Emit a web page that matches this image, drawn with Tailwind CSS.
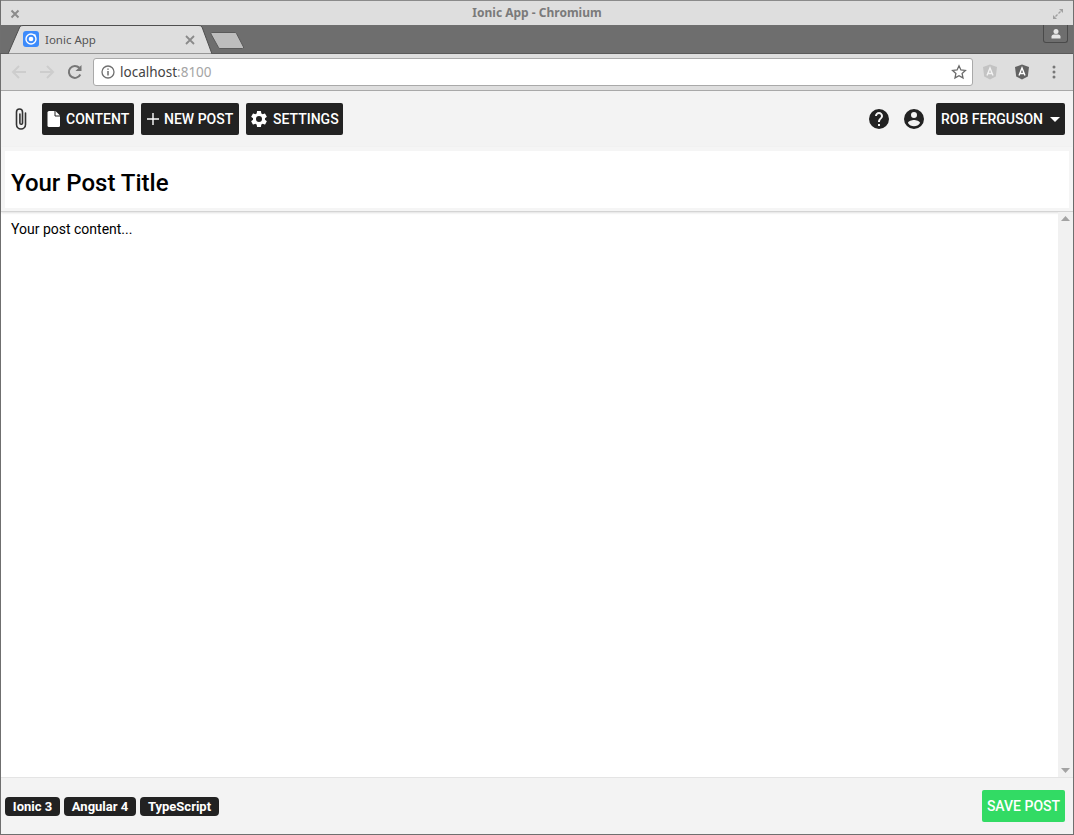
<!DOCTYPE html>
<html lang="en">
<head>
    <meta charset="UTF-8">
    <title>Ionic App - Chromium</title>
    <script src="https://cdn.jsdelivr.net/npm/@tailwindcss/browser@4"></script>
</head>
<body class="w-[1074px] h-[835px] overflow-hidden bg-white font-['Roboto',sans-serif]">
    <div class="flex flex-col h-[835px] border-x border-b border-[#6f6f6f]">

        <!-- window title -->
        <div class="relative h-[25px] shrink-0 bg-[#dedede] border-t border-[#8a8a8a] flex items-center justify-center font-['Noto_Sans',sans-serif] text-[12px] font-bold text-[#7a7a7a]">
            <svg class="absolute left-[9px] top-[8px]" width="10" height="10" viewBox="0 0 10 10"><path d="M1.5 1.5l7 7M8.5 1.5l-7 7" stroke="#8c8c8c" stroke-width="2"/></svg>
            <span>Ionic App - Chromium</span>
            <svg class="absolute left-[1051px] top-[7px]" width="12" height="12" viewBox="0 0 12 12"><path d="M11 1H7l4 4zM1 11h4l-4-4z" fill="#a0a0a0"/><path d="M8.500 3.500l-2 2M3.500 8.500l2-2" stroke="#a0a0a0" stroke-width="1.300"/></svg>
        </div>

        <!-- tab strip -->
        <div class="relative h-[29px] shrink-0 bg-[#6e6e6e] border-b border-[#5a5a5a]">
            <svg class="absolute left-[-1px] top-0" width="260" height="29" viewBox="0 0 260 29">
                <path d="M8 29 L20 1.500 Q21 0.500 23 0.500 H199 Q201 0.500 202 2 L212 29 Z" fill="#dedede" stroke="#4f4f4f" stroke-width="1"/>
                <path d="M0 28.500 H8 M212 28.500 H260" stroke="#5a5a5a" fill="none"/>
                <path d="M211.500 7.500 H235 Q236 7.500 236.500 8.500 L243.500 22 Q244 23.500 242.500 23.500 H220 Q219 23.500 218.500 22.500 L211 9 Q210.500 7.500 211.500 7.500 Z" fill="#bdbdbd" stroke="#5a5a5a"/>
            </svg>
            <div class="absolute left-[22px] top-[6px] w-4 h-4 rounded-[3px] bg-[#3d8bfb] flex items-center justify-center">
                <svg width="14" height="14" viewBox="0 0 14 14"><circle cx="7" cy="7" r="5" fill="none" stroke="#fff" stroke-width="1.400"/><circle cx="7" cy="7" r="2.300" fill="#fff"/><circle cx="10.700" cy="3.300" r="1" fill="#fff"/></svg>
            </div>
            <span class="absolute left-[44px] top-[7px] font-['Noto_Sans',sans-serif] text-[11.500px] leading-[16px] text-[#555]">Ionic App</span>
            <svg class="absolute left-[184px] top-[10px]" width="10" height="10" viewBox="0 0 10 10"><path d="M1 1l8 8M9 1l-8 8" stroke="#8a8a8a" stroke-width="1.800"/></svg>
            <div class="absolute left-[1042px] top-0 w-[25px] h-[18px] rounded-b-[3px] border border-t-0 border-[#4a4a4a] flex items-center justify-center">
                <svg width="12" height="12" viewBox="0 0 12 12"><circle cx="6" cy="3.500" r="2.500" fill="#e6e6e6"/><path d="M1.500 10.500v-2q0-1.500 2-2h5q2 .5 2 2v2z" fill="#e6e6e6"/></svg>
            </div>
        </div>

        <!-- browser toolbar -->
        <div class="h-[37px] shrink-0 bg-[#dedede] border-b border-[#a8a8a8] flex items-center">
            <svg class="ml-[9px]" width="18" height="18" viewBox="0 0 18 18"><path d="M16 9H3M9 3L3 9l6 6" fill="none" stroke="#cdcdcd" stroke-width="2"/></svg>
            <svg class="ml-[10px]" width="18" height="18" viewBox="0 0 18 18"><path d="M2 9h13M9 3l6 6-6 6" fill="none" stroke="#cdcdcd" stroke-width="2"/></svg>
            <svg class="ml-[10px]" width="18" height="18" viewBox="0 0 18 18"><path d="M14.300 11.500A6 6 0 1 1 13.300 4.800" fill="none" stroke="#777" stroke-width="2"/><path d="M15.500 2v6h-6z" fill="#777"/></svg>
            <div class="ml-[9px] w-[880px] h-[28px] bg-white border border-[#a9a9a9] rounded-[3px] flex items-center pl-[6px] pr-[5px] font-['Noto_Sans',sans-serif] text-[13.500px]">
                <svg width="16" height="16" viewBox="0 0 16 16"><circle cx="8" cy="8" r="6" fill="none" stroke="#6f6f6f" stroke-width="1.300"/><path d="M8 7v4.500M8 4.500v1.300" stroke="#6f6f6f" stroke-width="1.500"/></svg>
                <span class="ml-[4px] text-[#444]">localhost<span class="text-[#a5a5a5]">:8100</span></span>
                <svg class="ml-auto" width="16" height="16" viewBox="0 0 16 16"><path d="M8 1.800l1.900 4.100 4.500.5-3.300 3 .9 4.500L8 11.700l-4 2.200.9-4.500-3.300-3 4.500-.5z" fill="none" stroke="#6a6a6a" stroke-width="1.300"/></svg>
            </div>
            <svg class="ml-[8px]" width="18" height="18" viewBox="0 0 18 18"><path d="M9 1.500l7 2.500-1.200 9.500L9 16.500l-5.800-3L2 4z" fill="#c3c3c3"/><path d="M6 12.500L9 5l3 7.500M7 10.500h4" fill="none" stroke="#f2f2f2" stroke-width="1.400"/></svg>
            <svg class="ml-[14px]" width="18" height="18" viewBox="0 0 18 18"><path d="M9 1.500l7 2.500-1.200 9.500L9 16.500l-5.800-3L2 4z" fill="#626262"/><path d="M6 12.500L9 5l3 7.500M7 10.500h4" fill="none" stroke="#fff" stroke-width="1.400"/></svg>
            <svg class="ml-[20px]" width="6" height="16" viewBox="0 0 6 16"><circle cx="3" cy="3" r="1.500" fill="#777"/><circle cx="3" cy="8" r="1.500" fill="#777"/><circle cx="3" cy="13" r="1.500" fill="#777"/></svg>
        </div>

        <!-- app header -->
        <div class="h-[56px] shrink-0 bg-[#f3f3f3] flex items-center pl-[10px] pr-2 text-[14px] font-medium text-white">
            <svg class="mr-[11px]" width="20" height="24" viewBox="0 0 20 24"><path d="M14.500 6v11.500a4.500 4.500 0 0 1-9 0V5a3 3 0 0 1 6 0v11a1.300 1.300 0 0 1-2.600 0V7" fill="none" stroke="#333" stroke-width="1.600" stroke-linecap="round"/></svg>
            <button class="h-8 w-[92px] mr-[7px] bg-[#222] rounded-[2px] flex items-center pl-[5px]">
                <svg width="14" height="18" viewBox="0 0 14 18"><path d="M2 1h6.500L13 5.500V15.500q0 1.500-1.500 1.500h-9.500q-1.500 0-1.500-1.500V2.500Q.5 1 2 1z" fill="#fff"/><path d="M8 1v5h5" fill="none" stroke="#222" stroke-width="1"/></svg>
                <span class="ml-[5px]">CONTENT</span>
            </button>
            <button class="h-8 w-[98px] mr-[7px] bg-[#222] rounded-[2px] flex items-center pl-[5px]">
                <svg width="14" height="14" viewBox="0 0 14 14"><path d="M7 1v12M1 7h12" stroke="#fff" stroke-width="1.400"/></svg>
                <span class="ml-[4px]">NEW POST</span>
            </button>
            <button class="h-8 w-[97px] bg-[#222] rounded-[2px] flex items-center pl-[3px]">
                <svg width="20" height="20" viewBox="0 0 24 24"><path fill="#fff" d="M19.140 12.940c.04-.3.060-.61.060-.94 0-.32-.02-.64-.07-.94l2.030-1.580a.49.49 0 0 0 .12-.61l-1.920-3.320a.488.488 0 0 0-.59-.22l-2.390.96c-.5-.38-1.030-.7-1.620-.94l-.36-2.540a.484.484 0 0 0-.48-.41h-3.840c-.24 0-.43.170-.47.410l-.36 2.540c-.59.240-1.130.570-1.620.94l-2.390-.96c-.22-.08-.47 0-.59.220L2.740 8.870c-.12.210-.08.470.12.610l2.030 1.580c-.05.300-.09.630-.09.940s.02.640.07.940l-2.030 1.580a.49.49 0 0 0-.12.610l1.920 3.320c.12.220.37.290.59.220l2.390-.96c.5.380 1.030.7 1.620.94l.36 2.540c.05.240.24.410.48.410h3.840c.24 0 .44-.17.470-.41l.36-2.540c.59-.24 1.130-.56 1.620-.94l2.390.96c.22.080.47 0 .59-.22l1.920-3.320c.12-.22.070-.47-.12-.61l-2.010-1.580zM12 15.600A3.600 3.600 0 1 1 12 8.400a3.600 3.600 0 0 1 0 7.200z"/></svg>
                <span class="ml-[4px]">SETTINGS</span>
            </button>
            <svg class="ml-auto" width="24" height="24" viewBox="0 0 24 24"><path fill="#222" d="M12 2a10 10 0 1 0 0 20 10 10 0 0 0 0-20zm1 17h-2v-2h2v2zm2.070-7.750l-.9.920C13.450 12.900 13 13.500 13 15h-2v-.5c0-1.100.450-2.100 1.170-2.830l1.240-1.260c.37-.36.590-.86.590-1.410 0-1.100-.9-2-2-2s-2 .9-2 2H8c0-2.210 1.790-4 4-4s4 1.790 4 4c0 .88-.36 1.680-.93 2.250z"/></svg>
            <svg class="ml-[11px]" width="24" height="24" viewBox="0 0 24 24"><path fill="#222" d="M12 2a10 10 0 1 0 0 20 10 10 0 0 0 0-20zm0 3a3 3 0 1 1 0 6 3 3 0 0 1 0-6zm0 14.200a7.200 7.200 0 0 1-6-3.220c.03-1.990 4-3.080 6-3.080s5.970 1.090 6 3.080a7.200 7.200 0 0 1-6 3.220z"/></svg>
            <button class="ml-[10px] h-8 w-[129px] bg-[#222] rounded-[2px] flex items-center pl-[5px]">
                <span>ROB FERGUSON</span>
                <svg class="ml-[7px]" width="10" height="5" viewBox="0 0 10 5"><path d="M0 0h10L5 5z" fill="#fff"/></svg>
            </button>
        </div>

        <!-- title field -->
        <div class="h-[65px] shrink-0 bg-[#f5f5f5] border-b border-[#d4d4d4] shadow-[0_1px_2px_rgba(0,0,0,0.12)] pt-1 px-1">
            <div class="h-[57px] bg-white flex items-center pl-[6px] pt-[6px] text-[24px] font-medium text-black">Your Post Title</div>
        </div>

        <!-- post body -->
        <div class="flex-1 min-h-0 flex">
            <div class="flex-1 pl-[10px] pt-[8px] text-[14px] leading-[18px] text-black">Your post content...</div>
            <div class="w-[15px] bg-[#f1f1f1] flex flex-col items-center justify-between py-[4px]">
                <svg width="9" height="5" viewBox="0 0 9 5"><path d="M4.500 0L9 5H0z" fill="#a3a3a3"/></svg>
                <svg width="9" height="5" viewBox="0 0 9 5"><path d="M0 0h9L4.500 5z" fill="#a3a3a3"/></svg>
            </div>
        </div>

        <!-- footer -->
        <div class="h-[57px] shrink-0 bg-[#f3f3f3] border-t border-[#e4e4e4] flex items-center pl-1 pr-2">
            <div class="flex gap-1 mt-[1px] text-[13px] font-bold text-white">
                <span class="w-[55px] h-[19px] leading-[19px] text-center bg-[#222] rounded-[4px]">Ionic 3</span>
                <span class="w-[72px] h-[19px] leading-[19px] text-center bg-[#222] rounded-[4px]">Angular 4</span>
                <span class="w-[79px] h-[19px] leading-[19px] text-center bg-[#222] rounded-[4px]">TypeScript</span>
            </div>
            <button class="ml-auto w-[83px] h-8 bg-[#32db64] rounded-[2px] text-[14px] font-medium text-white">SAVE POST</button>
        </div>
    </div>
</body>
</html>
